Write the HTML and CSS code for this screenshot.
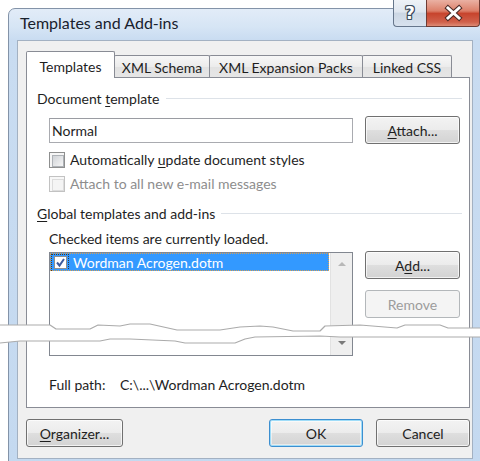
FILE: index.html
```html
<!DOCTYPE html>
<html lang="en">
<head>
<meta charset="utf-8">
<title>Templates and Add-ins</title>
<link rel="stylesheet" href="styles.css">
</head>
<body>
<div class="dialog">
  <div class="titlebar"><span class="title">Templates and Add-ins</span></div>
  <div class="caption-buttons">
    <div class="cap cap-help"><span>?</span></div>
    <div class="cap cap-close">
      <svg width="52" height="26" viewBox="0 0 52 26">
        <path class="x-outline" d="M21 8 L32 18 M32 8 L21 18"/>
        <path class="x-fill" d="M21 8 L32 18 M32 8 L21 18"/>
      </svg>
    </div>
  </div>
  <div class="client">
    <div class="tabs">
      <div class="tab tab-active tab-templates">Templates</div>
      <div class="tab tab-schema">XML Schema</div>
      <div class="tab tab-packs">XML Expansion Packs</div>
      <div class="tab tab-css">Linked CSS</div>
    </div>
    <div class="panel">
      <div class="group"><span>Document <u>t</u>emplate</span><span class="sep"></span></div>
      <div class="row-template">
        <div class="textbox">Normal</div>
        <div class="btn btn-side"><span><u>A</u>ttach...</span></div>
      </div>
      <div class="check"><span class="cb"></span><span>Automatically <u>u</u>pdate document styles</span></div>
      <div class="check check-disabled"><span class="cb"></span><span>Attach to all new e-mail messages</span></div>
      <div class="group group-global"><span><u>G</u>lobal templates and add-ins</span><span class="sep"></span></div>
      <div class="hint">Checked items are currently loaded.</div>
      <div class="row-list">
        <div class="listbox">
          <div class="items">
            <div class="item">
              <span class="item-cb">
                <span class="item-box">
                  <svg width="11" height="11" viewBox="0 0 11 11"><path d="M2 5.5 L4.5 8.5 L9 2"/></svg>
                </span>
              </span>
              <span class="item-text">Wordman Acrogen.dotm</span>
            </div>
          </div>
          <div class="scrollbar"><span class="arrow arrow-up"></span><span class="arrow arrow-down"></span></div>
        </div>
        <div class="side-buttons">
          <div class="btn btn-side"><span>A<u>d</u>d...</span></div>
          <div class="btn btn-side btn-disabled"><span>Remove</span></div>
        </div>
      </div>
      <div class="path"><span class="path-label">Full path:</span><span>C:\...\Wordman Acrogen.dotm</span></div>
    </div>
    <div class="footer">
      <div class="btn btn-organizer"><span><u>O</u>rganizer...</span></div>
      <div class="btn btn-default btn-ok"><span>OK</span></div>
      <div class="btn btn-cancel"><span>Cancel</span></div>
    </div>
  </div>
</div>
<svg class="tear" width="480" height="32" viewBox="0 318 480 32">
  <path class="tear-gap" d="M0 325 L50 325 L56 329 L90 329 L98 325 L120 326 L130 324 L150 324 L177 330 L220 330 L240 327 L260 326 L273 327 L283 329 L293 331 L320 331 L325 326 L360 325 L397 328 L405 325 L440 325 L448 328 L480 328 L480 337 L340 337 L320 336 L255 337 L245 339 L235 343 L185 343 L175 341 L130 339 L110 339 L100 341 L20 341 L10 342 L0 343 Z"/>
  <path class="tear-edge" d="M0 325 L50 325 L56 329 L90 329 L98 325 L120 326 L130 324 L150 324 L177 330 L220 330 L240 327 L260 326 L273 327 L283 329 L293 331 L320 331 L325 326 L360 325 L397 328 L405 325 L440 325 L448 328 L480 328"/>
  <path class="tear-edge" d="M0 343 L10 342 L20 341 L100 341 L110 339 L130 339 L175 341 L185 343 L235 343 L245 339 L255 337 L320 336 L340 337 L480 337"/>
</svg>
</body>
</html>
```
FILE: styles.css
```css
* {
  box-sizing: border-box;
}

html,
body {
  margin: 0;
}

body {
  position: relative;
  width: 480px;
  height: 461px;
  overflow: hidden;
  background: #fff;
  font-family: Lato, "Open Sans", "DejaVu Sans", sans-serif;
  font-size: 14px;
  line-height: 17px;
  color: #1e1e1e;
}

u {
  text-decoration: underline;
  text-underline-offset: 2px;
}

/* Window frame */
.dialog {
  position: relative;
  display: flex;
  flex-direction: column;
  width: 480px;
  height: 462px;
  margin: 8px 0 0 8px;
  padding: 0 14px 0 8px;
  border: 1px solid #8393a8;
  border-radius: 7px 7px 0 0;
  background: linear-gradient(#e2ecf8 0px, #d6e5f5 18px, #c9dcf1 31px, #c4d9f0 100%);
}

.titlebar {
  height: 31px;
  padding: 4px 0 0 3px;
  flex: none;
}

.title {
  font-size: 16px;
  line-height: 20px;
  color: #18212d;
}

.caption-buttons {
  position: absolute;
  top: -9px;
  right: 7px;
  display: flex;
}

.cap {
  height: 27px;
  display: flex;
  align-items: center;
  justify-content: center;
  border: 1px solid #66768b;
  border-top: none;
}

.cap-help {
  width: 33px;
  border-right: none;
  border-radius: 0 0 0 4px;
  background: linear-gradient(#eef2f7, #dfe6ef 45%, #ccd7e4 52%, #d8e2ee);
}

.cap-help span {
  font: bold 17px/1 "DejaVu Sans", sans-serif;
  color: #fff;
  text-shadow:
    1px 0 0 #3d4b5e, -1px 0 0 #3d4b5e, 0 1px 0 #3d4b5e, 0 -1px 0 #3d4b5e,
    1px 1px 0 #3d4b5e, -1px -1px 0 #3d4b5e, 1px -1px 0 #3d4b5e, -1px 1px 0 #3d4b5e;
}

.cap-close {
  width: 54px;
  border-color: #6e3b33;
  border-radius: 0 0 4px 0;
  background: linear-gradient(#eab1a3, #dc7f69 42%, #c7442d 52%, #d0614b 85%, #de8b75);
}

.cap-close svg {
  display: block;
}

.x-outline {
  fill: none;
  stroke: #4a2a26;
  stroke-width: 5;
  stroke-linecap: square;
}

.x-fill {
  fill: none;
  stroke: #fff;
  stroke-width: 3;
  stroke-linecap: square;
}

/* Client area */
.client {
  display: flex;
  flex-direction: column;
  height: 419px;
  flex: none;
  padding: 10px 2px 0 8px;
  background: #f0f0f0;
  border: 1px solid #a3b1c2;
}

.tabs {
  display: flex;
  align-items: flex-end;
  flex: none;
}

.tab {
  height: 22px;
  margin-left: -1px;
  padding-top: 3px;
  text-align: center;
  border: 1px solid #898c95;
  border-bottom: none;
  border-radius: 2px 2px 0 0;
  background: linear-gradient(#f7f7f7, #ececec 50%, #e2e2e2 52%, #e6e6e6);
}

.tab-active {
  position: relative;
  z-index: 1;
  height: 27px;
  margin: 0 0 -1px 0;
  padding-top: 6px;
  background: #fff;
}

.tab-templates { width: 89px; }
.tab-schema { width: 96px; }
.tab-packs { width: 154px; }
.tab-css { width: 90px; }

.panel {
  height: 331px;
  flex: none;
  padding: 12px 7px 0 10px;
  background: #fff;
  border: 1px solid #898c95;
}

.group {
  display: flex;
  align-items: center;
  height: 17px;
}

.sep {
  flex: 1;
  height: 1px;
  margin-left: 6px;
  background: #dde2e8;
}

.group-global {
  margin-top: 13px;
}

.row-template {
  display: flex;
  align-items: center;
  height: 28px;
  margin: 9px 0 0 12px;
}

.textbox {
  width: 304px;
  height: 25px;
  padding: 3px 0 0 2px;
  background: #fff;
  border: 1px solid #a9abb0;
  border-top-color: #9a9ca2;
}

/* Push buttons */
.btn {
  height: 28px;
  display: flex;
  align-items: center;
  justify-content: center;
  border: 1px solid #707070;
  border-radius: 3px;
  background: linear-gradient(#f3f3f3 0%, #ececec 48%, #dedede 52%, #d3d3d3 100%);
  box-shadow: inset 0 0 0 1px rgba(255, 255, 255, 0.7);
}

.btn-side {
  width: 95px;
  margin-left: 12px;
}

.side-buttons .btn-side {
  margin-left: 0;
}

.btn-disabled {
  color: #9c9c9c;
  border-color: #b3b7ba;
  background: #f4f4f4;
  box-shadow: none;
}

.btn-default {
  border-color: #3c8fd0;
  box-shadow: inset 0 0 0 1px #9fdcf8, inset 0 0 0 2px rgba(255, 255, 255, 0.5);
}

/* Check boxes */
.check {
  display: flex;
  align-items: center;
  gap: 5px;
  height: 17px;
  margin: 7px 0 0 12px;
}

.cb {
  flex: none;
  width: 16px;
  height: 16px;
  padding: 2px;
  background: #f6f6f6;
  border: 1px solid #8e8f8f;
}

.cb::after {
  content: "";
  display: block;
  width: 10px;
  height: 10px;
  border: 1px solid #aeb2b7;
  background: linear-gradient(135deg, #d0d3d7, #f5f5f5);
}

.check-disabled {
  color: #8d8d8d;
}

.check-disabled .cb {
  border-color: #c2c2c2;
  background: #f7f7f7;
}

.check-disabled .cb::after {
  border-color: #dcdcdc;
  background: #f4f4f4;
}

.hint {
  margin: 8px 0 0 12px;
}

/* List of loaded templates */
.row-list {
  display: flex;
  align-items: flex-start;
  margin: 5px 0 0 12px;
}

.listbox {
  display: flex;
  width: 304px;
  height: 104px;
  flex: none;
  background: #fff;
  border: 1px solid #828790;
}

.items {
  width: 280px;
  flex: none;
}

.item {
  display: flex;
  align-items: center;
  width: 279px;
  height: 18px;
  color: #fff;
  background: #3399ff;
  outline: 1px dotted #d9a054;
  outline-offset: -1px;
}

.item-cb {
  display: flex;
  align-items: center;
  justify-content: center;
  width: 18px;
  height: 17px;
  margin-left: 1px;
  border: 1px dotted #3a3a3a;
}

.item-box {
  display: flex;
  align-items: center;
  justify-content: center;
  width: 13px;
  height: 13px;
  background: #fff;
  border: 1px solid #8e8f8f;
}

.item-box svg path {
  fill: none;
  stroke: #3d5a9c;
  stroke-width: 2;
}

.item-text {
  margin-left: 4px;
}

.scrollbar {
  display: flex;
  flex: 1;
  flex-direction: column;
  align-items: center;
  justify-content: space-between;
  padding: 9px 0 10px;
  background: #efefef;
  border-left: 1px solid #e2e2e2;
}

.arrow {
  width: 0;
  height: 0;
  border-left: 4px solid transparent;
  border-right: 4px solid transparent;
}

.arrow-up {
  border-bottom: 4px solid #b8b8b8;
}

.arrow-down {
  border-top: 4px solid #7a7a7a;
}

.side-buttons {
  display: flex;
  flex-direction: column;
  gap: 11px;
  margin: -1px 0 0 12px;
}

.path {
  display: flex;
  margin: 20px 0 0 12px;
}

.path-label {
  width: 71px;
}

/* Dialog buttons */
.footer {
  display: flex;
  margin-top: 11px;
}

.btn-organizer {
  width: 97px;
}

.btn-ok {
  width: 94px;
  margin-left: auto;
}

.btn-cancel {
  width: 94px;
  margin-left: 13px;
}

/* Torn-paper break across the list */
.tear {
  position: absolute;
  left: 0;
  top: 318px;
}

.tear-gap {
  fill: #fff;
}

.tear-edge {
  fill: none;
  stroke: #ababab;
  stroke-width: 1.2;
  stroke-linejoin: round;
}
```
